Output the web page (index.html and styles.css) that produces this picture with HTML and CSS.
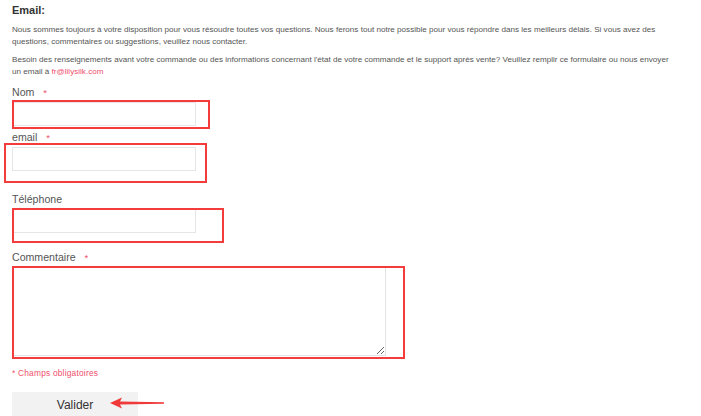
FILE: index.html
```html
<!DOCTYPE html>
<html lang="fr">
<head>
<meta charset="utf-8">
<link rel="stylesheet" href="styles.css">
</head>
<body>
<div class="page">
  <h3 class="title">Email:</h3>
  <p class="intro">Nous sommes toujours à votre disposition pour vous résoudre toutes vos questions. Nous ferons tout notre possible pour vous répondre dans les meilleurs délais. Si vous avez des questions, commentaires ou suggestions, veuillez nous contacter.</p>
  <p class="intro">Besoin des renseignements avant votre commande ou des informations concernant l'état de votre commande et le support après vente? Veuillez remplir ce formulaire ou nous envoyer un email à <a class="mail" href="#">fr@lilysilk.com</a></p>
  <form class="form">
    <div class="field f-nom">
      <label class="label">Nom <span class="req">*</span></label>
      <input class="input" type="text">
      <span class="mark mark-nom"></span>
    </div>
    <div class="field f-email">
      <label class="label">email <span class="req">*</span></label>
      <input class="input" type="text">
      <span class="mark mark-email"></span>
    </div>
    <div class="field f-tel">
      <label class="label">Téléphone</label>
      <input class="input" type="text">
      <span class="mark mark-tel"></span>
    </div>
    <div class="field f-comment">
      <label class="label">Commentaire <span class="req">*</span></label>
      <textarea class="textarea"></textarea>
      <span class="mark mark-comment"></span>
    </div>
    <p class="required">* Champs obligatoires</p>
    <div class="actions">
      <button class="btn" type="button">Valider</button>
      <svg class="arrow" width="56" height="12" viewBox="0 0 56 12">
        <path d="M0 6 L12 0.5 L10 4.6 L54 5.2 L54 6.8 L10 7.4 L12 11.5 Z" fill="#f03a3a"/>
      </svg>
    </div>
  </form>
</div>
</body>
</html>
```
FILE: styles.css
```css
html, body {
  margin: 0;
  padding: 0;
  background: #fff;
}
.page {
  padding: 3px 12px 0 12px;
  font-family: "Liberation Sans", Arial, sans-serif;
  color: #555;
}
.title {
  margin: 0 0 7px 0;
  font-size: 11px;
  line-height: 14px;
  font-weight: bold;
  color: #333;
}
.intro {
  max-width: 664px;
  margin: 0 0 6px 0;
  font-size: 8.1px;
  line-height: 12px;
  color: #555;
}
.mail {
  color: #f0506e;
  text-decoration: none;
}
.form {
  margin: 8px 0 0 0;
}
.field {
  position: relative;
  display: flex;
  flex-direction: column;
  align-items: flex-start;
}
.label {
  display: block;
  height: 12px;
  font-size: 10.6px;
  line-height: 12px;
  color: #555;
}
.req {
  color: #f0506e;
  margin-left: 6px;
  font-size: 9.5px;
}
.input {
  display: block;
  box-sizing: border-box;
  width: 184px;
  height: 24px;
  margin: 0;
  border: 1px solid #e6e6e6;
  background: #fff;
  padding: 0 4px;
}
.f-nom .input { margin-top: 4px; }
.f-email { margin-top: 5px; }
.f-email .input { margin-top: 4px; }
.f-tel { margin-top: 22px; }
.f-tel .input { margin-top: 4px; }
.f-comment { margin-top: 18px; }
.textarea {
  display: block;
  box-sizing: border-box;
  width: 373px;
  height: 89px;
  margin: 4px 0 0 1px;
  border: 1px solid #e3e3e3;
  background: #fff;
  resize: both;
}
.mark {
  position: absolute;
  box-sizing: border-box;
  border: 2px solid #f43c3c;
  pointer-events: none;
}
.mark-nom { left: 0; top: 14px; width: 198px; height: 29px; }
.mark-email { left: -8px; top: 12px; width: 203px; height: 40px; }
.mark-tel { left: 0; top: 15px; width: 212px; height: 35px; }
.mark-comment { left: 0; top: 15px; width: 393px; height: 93px; }
.required {
  margin: 12px 0 0 0;
  font-size: 8.4px;
  letter-spacing: 0.2px;
  line-height: 10px;
  color: #f0506e;
}
.actions {
  position: relative;
  margin-top: 14px;
}
.btn {
  display: block;
  width: 126px;
  height: 26px;
  border: 0;
  background: #f2f2f2;
  font-family: "Liberation Sans", Arial, sans-serif;
  font-size: 12px;
  color: #333;
  padding: 0;
}
.arrow {
  position: absolute;
  left: 98px;
  top: 5px;
}
```
